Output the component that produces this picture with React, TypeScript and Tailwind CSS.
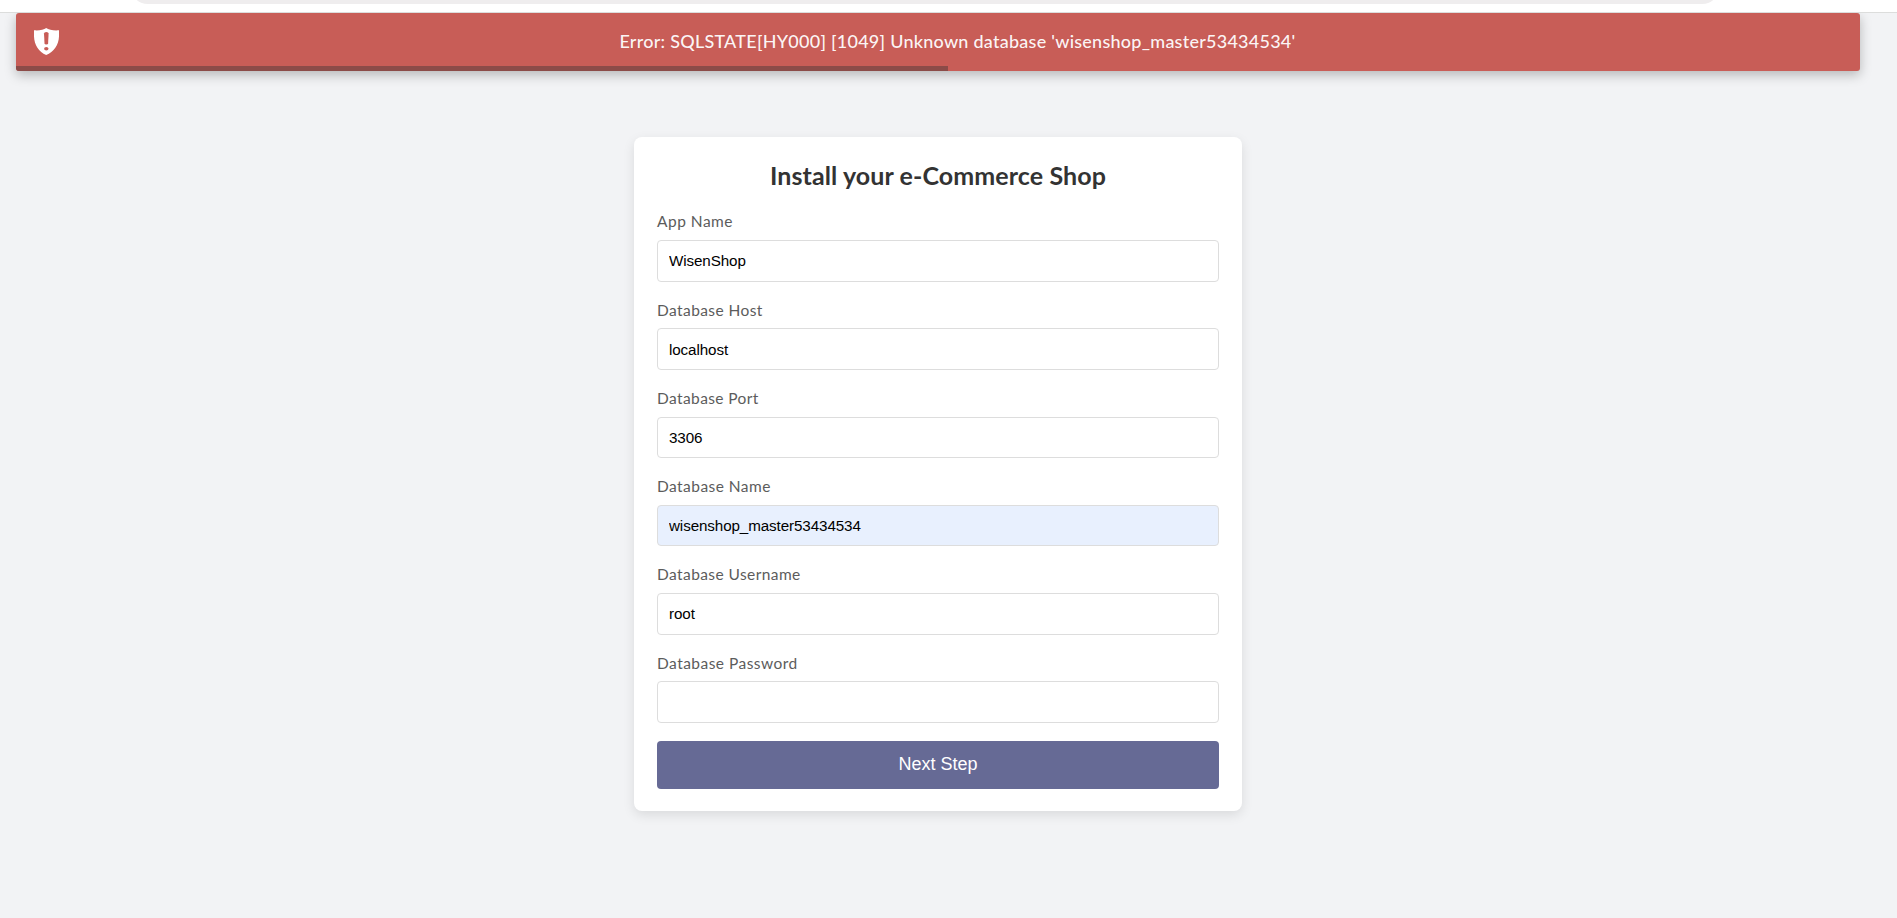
const fields = [
  { label: "App Name", value: "WisenShop", tracking: "tracking-[0.5px]" },
  { label: "Database Host", value: "localhost", tracking: "tracking-[0.42px]" },
  { label: "Database Port", value: "3306", tracking: "tracking-[0.4px]" },
  { label: "Database Name", value: "wisenshop_master53434534", tracking: "tracking-[0.45px]", filled: true },
  { label: "Database Username", value: "root", tracking: "tracking-[0.42px]" },
  { label: "Database Password", value: "", tracking: "tracking-[0.47px]" },
];

function ShieldIcon() {
  return (
    <svg className="ml-[18px] h-[27px] w-[25px] shrink-0" viewBox="0 0 25 27" fill="none">
      <path
        d="M12.2 0C9.8 2 4.8 2.7 0 2.3V8.5C0.3 17 4.8 23.8 12.2 27C19.8 23.8 24.7 17 25 8.5V2.3C19.8 2.7 14.8 2 12.2 0Z"
        fill="#fff"
      />
      <path d="M10 5.6Q10 4 12.3 4T14.6 5.6L14.1 15.2Q14 16.6 12.3 16.6T10.5 15.2Z" fill="#c85d57" />
      <ellipse cx="12.3" cy="20.7" rx="2.2" ry="1.7" fill="#c85d57" />
    </svg>
  );
}

export default function App() {
  return (
    <div className="flex h-[918px] w-full flex-col overflow-hidden bg-[#f2f3f5] font-['Lato',sans-serif]">
      <div className="relative z-10 h-[13px] shrink-0 border-b border-[#dcdddc] bg-white">
        <div className="mr-[177px] ml-[130px] h-1 overflow-hidden">
          <div className="-mt-8 h-9 rounded-[18px] bg-[#efedee]" />
        </div>
      </div>

      <div className="mr-[37px] ml-4 flex h-[58px] shrink-0 flex-col overflow-hidden rounded-[3px] bg-[#c85d57] shadow-[0_4px_12px_rgba(0,0,0,0.25)]">
        <div className="flex h-[53px] items-center pt-[4px] pr-1">
          <ShieldIcon />
          <p className="-mt-[2px] flex-1 text-center text-[18px] leading-6 font-medium tracking-[0.25px] text-white/95">
            Error: SQLSTATE[HY000] [1049] Unknown database 'wisenshop_master53434534'
          </p>
        </div>
        <div className="h-[5px] w-[932px] bg-[#8b4b48]" />
      </div>

      <main className="mt-[66px] ml-[634px] h-[674px] w-[608px] shrink-0 rounded-lg bg-white px-[23px] pt-[22px] shadow-[0_4px_12px_rgba(0,0,0,0.1)]">
        <h1 className="h-[50.42px] text-center text-[25px] leading-8 font-bold tracking-[0.1px] text-[#333]">
          Install your e-Commerce Shop
        </h1>
        <form>
          {fields.map((f) => (
            <div key={f.label} className="h-[88.22px]">
              <label className={`block h-[30.78px] text-[15.5px] leading-6 text-[#5c5c5c] ${f.tracking}`}>{f.label}</label>
              <input
                defaultValue={f.value}
                className={`block h-[41.6px] w-full rounded border border-[#ddd] px-[11px] pb-[0.1px] font-['Liberation_Sans',Arial,sans-serif] text-[15.2px] tracking-[-0.1px] text-black outline-none ${f.filled ? "bg-[#e8f0fe]" : "bg-white"}`}
              />
            </div>
          ))}
          <button
            type="button"
            className="mt-[2.26px] block h-12 w-full rounded bg-[#666a95] pb-[1px] font-['Liberation_Sans',Arial,sans-serif] text-[18px] text-white"
          >
            Next Step
          </button>
        </form>
      </main>
    </div>
  );
}
